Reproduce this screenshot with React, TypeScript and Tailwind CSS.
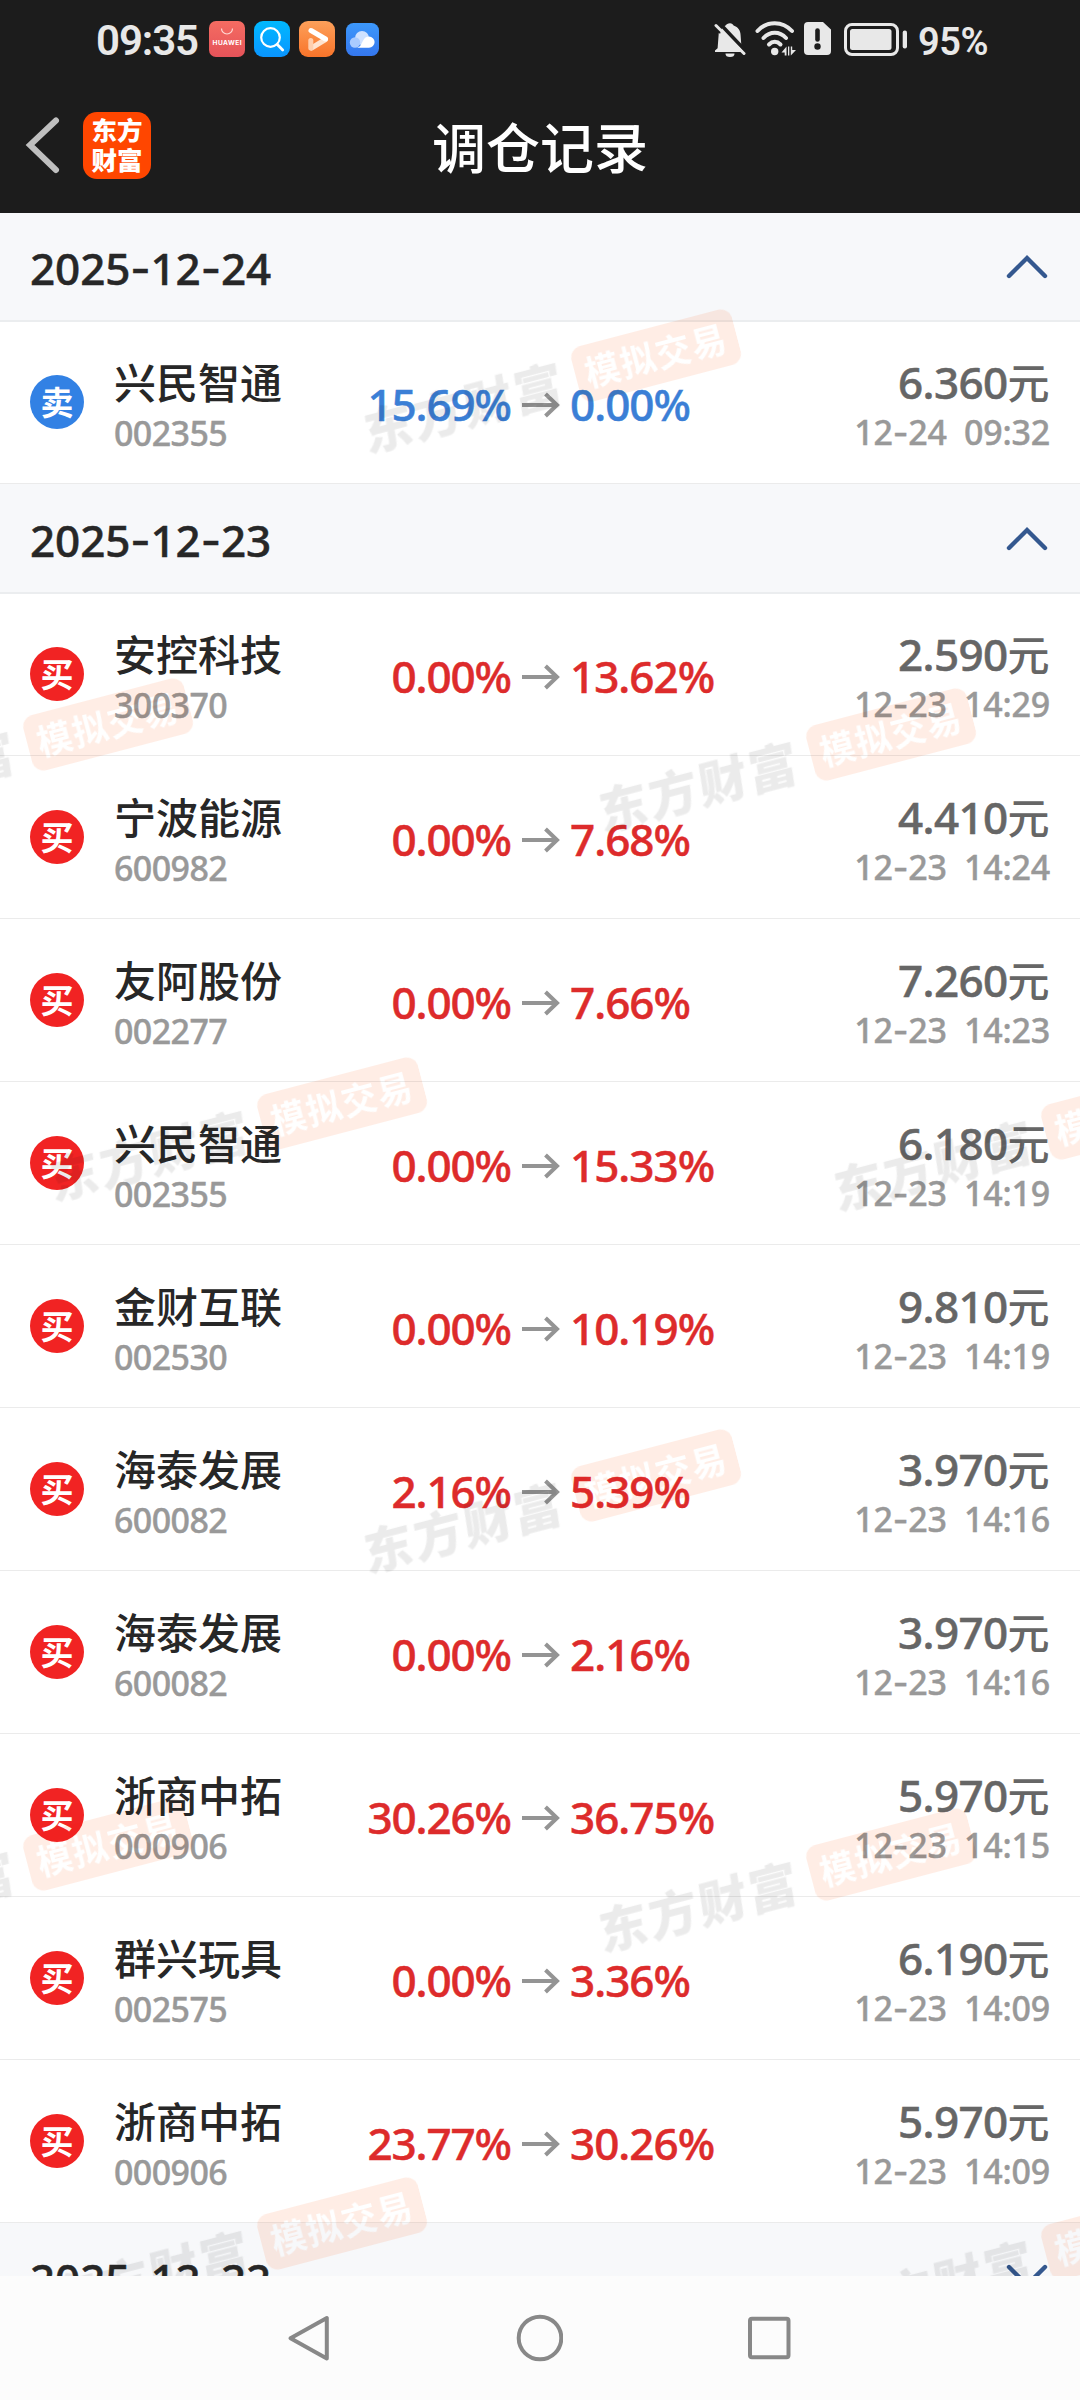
interface Trade {
  side: "buy" | "sell";
  name: string;
  code: string;
  from: string;
  to: string;
  price: string;
  time: string;
}

interface TradeDay {
  date: string;
  open: boolean;
  trades: Trade[];
}

const days: TradeDay[] = [
  {
    date: "2025-12-24",
    open: true,
    trades: [
      { side: "sell", name: "兴民智通", code: "002355", from: "15.69%", to: "0.00%", price: "6.360", time: "12-24  09:32" },
    ],
  },
  {
    date: "2025-12-23",
    open: true,
    trades: [
      { side: "buy", name: "安控科技", code: "300370", from: "0.00%", to: "13.62%", price: "2.590", time: "12-23  14:29" },
      { side: "buy", name: "宁波能源", code: "600982", from: "0.00%", to: "7.68%", price: "4.410", time: "12-23  14:24" },
      { side: "buy", name: "友阿股份", code: "002277", from: "0.00%", to: "7.66%", price: "7.260", time: "12-23  14:23" },
      { side: "buy", name: "兴民智通", code: "002355", from: "0.00%", to: "15.33%", price: "6.180", time: "12-23  14:19" },
      { side: "buy", name: "金财互联", code: "002530", from: "0.00%", to: "10.19%", price: "9.810", time: "12-23  14:19" },
      { side: "buy", name: "海泰发展", code: "600082", from: "2.16%", to: "5.39%", price: "3.970", time: "12-23  14:16" },
      { side: "buy", name: "海泰发展", code: "600082", from: "0.00%", to: "2.16%", price: "3.970", time: "12-23  14:16" },
      { side: "buy", name: "浙商中拓", code: "000906", from: "30.26%", to: "36.75%", price: "5.970", time: "12-23  14:15" },
      { side: "buy", name: "群兴玩具", code: "002575", from: "0.00%", to: "3.36%", price: "6.190", time: "12-23  14:09" },
      { side: "buy", name: "浙商中拓", code: "000906", from: "23.77%", to: "30.26%", price: "5.970", time: "12-23  14:09" },
    ],
  },
  { date: "2025-12-22", open: false, trades: [] },
];

// badge centres, relative to the top of the list
const watermarks = [
  { x: 656, y: 143 },
  { x: 108, y: 512 },
  { x: 891, y: 522 },
  { x: 342, y: 891 },
  { x: 1126, y: 901 },
  { x: 656, y: 1263 },
  { x: 108, y: 1632 },
  { x: 891, y: 1642 },
  { x: 342, y: 2011 },
  { x: 1126, y: 2021 },
];

// The hyphen of the text font is too short, Inter has the wide one
const DateText = ({ value }: { value: string }) => (
  <>
    {value.split("-").map((part, index) => (
      <span key={index}>
        {index > 0 && <span className="font-['Inter']">-</span>}
        {part}
      </span>
    ))}
  </>
);

const StatusBar = () => (
  <div className="flex h-20 items-start text-[#e8e8e8]">
    <div className="ml-[96px] mt-[14px] w-[113px] font-['Roboto'] text-[42px] leading-[54px] font-semibold tracking-[-1.1px]">
      09:35
    </div>
    <svg className="mt-[21px]" width="36" height="36" viewBox="0 0 36 36">
      <defs>
        <linearGradient id="mall" x1="0" y1="0" x2="0" y2="1">
          <stop offset="0" stopColor="#f56c62" />
          <stop offset="1" stopColor="#e55359" />
        </linearGradient>
      </defs>
      <rect width="36" height="36" rx="7" fill="url(#mall)" />
      <path d="M12.5 7.5a5.5 5.5 0 0 0 11 0" fill="none" stroke="#ffd9d4" strokeWidth="1.2" />
      <text x="18" y="24" textAnchor="middle" fontSize="6.6" fontWeight="700" fontFamily="Inter, sans-serif" fill="#fff" textLength="29">
        HUAWEI
      </text>
    </svg>
    <svg className="ml-[9px] mt-[21px]" width="36" height="36" viewBox="0 0 36 36">
      <defs>
        <linearGradient id="search" x1="0" y1="0" x2="0" y2="1">
          <stop offset="0" stopColor="#00b9ff" />
          <stop offset="1" stopColor="#0a95ff" />
        </linearGradient>
      </defs>
      <rect width="36" height="36" rx="9" fill="url(#search)" />
      <circle cx="16.5" cy="16.5" r="9.3" fill="none" stroke="#fff" strokeWidth="2.2" />
      <path d="M23.3 23.6l5.4 5.4" stroke="#fff" strokeWidth="2.8" strokeLinecap="round" />
    </svg>
    <svg className="ml-[9px] mt-[21px]" width="36" height="36" viewBox="0 0 36 36">
      <defs>
        <linearGradient id="video" x1="0" y1="0" x2="0" y2="1">
          <stop offset="0" stopColor="#fda05a" />
          <stop offset="1" stopColor="#f8742a" />
        </linearGradient>
      </defs>
      <rect width="36" height="36" rx="9" fill="url(#video)" />
      <path d="M26.500 18.500L12.500 27" stroke="#ffe3cf" strokeWidth="5" strokeLinecap="round" />
      <path d="M11.800 19.500v7.500" stroke="#ffcfae" strokeWidth="5" strokeLinecap="round" />
      <path d="M12 9.500l14.500 8.500" stroke="#fff" strokeWidth="5" strokeLinecap="round" />
    </svg>
    <svg className="ml-[11px] mt-[23px]" width="33" height="33" viewBox="0 0 33 33">
      <defs>
        <linearGradient id="cloud" x1="0" y1="0" x2="0" y2="1">
          <stop offset="0" stopColor="#3c98fb" />
          <stop offset="1" stopColor="#3577ee" />
        </linearGradient>
      </defs>
      <rect width="33" height="33" rx="7.5" fill="url(#cloud)" />
      <circle cx="16" cy="15" r="7" fill="#cfe2ff" />
      <circle cx="9" cy="19.5" r="5.2" fill="#a9cbff" />
      <path d="M11 24.700c3.500-1 4.500-4 6-7 1.200-2.700 3.400-4.200 6-4.200a5.600 5.600 0 0 1 0 11.200z" fill="#fff" />
    </svg>

    <svg className="ml-[335px] mt-[22px]" width="32" height="36" viewBox="0 0 32 36">
      <path
        d="M16 1.200c1.800 0 3.100.9 3.600 2.400 4.600 1.500 6.900 5.200 7 9.600l.9 12.500 1.500 3v1.300H1v-1.500l2.600-2.300 1-13c.2-4.300 2.400-8 7-9.600.6-1.500 2.300-2.400 4.400-2.400z"
        fill="currentColor"
      />
      <path d="M11.500 31.500h9a4.500 3.500 0 0 1-9 0z" fill="currentColor" />
      <path d="M4.500 0L33 30.500" stroke="#1c1c1c" strokeWidth="3.5" />
      <path d="M0 5L4 0l6 0-4 12z" fill="#1c1c1c" />
      <path d="M2 3.500l28 28" stroke="currentColor" strokeWidth="3" strokeLinecap="round" />
    </svg>
    <svg className="ml-[9px] mt-[21px]" width="42" height="36" viewBox="0 0 42 36">
      <g fill="none" stroke="currentColor" strokeWidth="4" strokeLinecap="round">
        <path d="M2.500 10C12-.5 27.500-.5 37 10" />
        <path d="M8.500 17C15 10 24.500 10 31 17" />
        <path d="M14 23.500c3.500-3.600 8-3.600 11.500 0" />
      </g>
      <circle cx="19.7" cy="30.5" r="3.7" fill="currentColor" />
      <path d="M31.500 25.500v9h-1.800v-3h-3.200zM33 25.500h1.300v9H33zM35.800 34.500v-9h1.400v3.500h3.800z" fill="currentColor" />
    </svg>
    <svg className="ml-[7px] mt-[22px]" width="27" height="33" viewBox="0 0 27 33">
      <path d="M4 0h15l8 7.500V29a4 4 0 0 1-4 4H4a4 4 0 0 1-4-4V4a4 4 0 0 1 4-4z" fill="currentColor" />
      <path d="M13.500 8.500v9" stroke="#1c1c1c" strokeWidth="4.6" strokeLinecap="round" />
      <circle cx="13.5" cy="24.5" r="3.2" fill="#1c1c1c" />
    </svg>
    <svg className="ml-[13px] mt-[23px]" width="64" height="33" viewBox="0 0 64 33">
      <rect x="1.5" y="1.5" width="52" height="30" rx="6.5" fill="none" stroke="currentColor" strokeWidth="3" />
      <rect x="6" y="6" width="41.5" height="21" rx="2.5" fill="currentColor" />
      <rect x="58.7" y="7.5" width="4.3" height="18" rx="2" fill="currentColor" />
    </svg>
    <div className="ml-[10px] mt-[15px] font-['Roboto'] text-[38px] leading-[54px] font-semibold tracking-[-0.5px]">
      95%
    </div>
  </div>
);

const TitleBar = () => (
  <div className="grid h-[133px] grid-cols-[1fr_auto_1fr] items-start">
    <div className="flex">
      <svg className="ml-6 mt-[35px]" width="40" height="60" viewBox="0 0 40 60">
        <path d="M32 5.500L6 30l26 25" fill="none" stroke="#bfbfbf" strokeWidth="6" strokeLinecap="round" />
      </svg>
      <div className="ml-[19px] mt-[32px] flex h-[67px] w-[68px] flex-col items-center rounded-[14px] bg-[#ff4600] pt-[3px] text-center text-[25.500px] leading-[30px] font-black text-white">
        <span>东方</span>
        <span>财富</span>
      </div>
    </div>
    <h1 className="mt-[33px] text-[54px] leading-[70px] font-medium text-white">
      调仓记录
    </h1>
  </div>
);

const DayHeader = ({ date, open }: { date: string; open: boolean }) => (
  <div className="flex h-[110px] items-center justify-between border-b-2 border-[#ebedef] bg-[#f7f8fa] px-[30px]">
    <div className="pt-[5px] text-[44px] leading-[60px] font-medium tracking-[-0.1px] text-[#272727] [-webkit-text-stroke:0.5px]">
      <DateText value={date} />
    </div>
    <svg width="46" height="30" viewBox="0 0 46 30">
      <path
        d={open ? "M5 25L23 7l18 18" : "M5 5l18 18L41 5"}
        fill="none"
        stroke="#34588f"
        strokeWidth="4.4"
        strokeLinecap="round"
      />
    </svg>
  </div>
);

const TradeRow = ({ trade }: { trade: Trade }) => {
  const buy = trade.side === "buy";
  const color = buy ? "text-[#dd2b2b]" : "text-[#3b7fd6]";
  return (
    <div className="flex h-[163px] items-end border-b border-[#ebebeb] bg-white px-[30px] font-medium first:h-[162px]">
      <div
        className={`mb-[54px] flex h-[54px] w-[54px] items-center justify-center rounded-full pt-px text-[33px] leading-[54px] font-semibold text-white ${
          buy ? "bg-[#f12323]" : "bg-[#3281e4]"
        }`}
      >
        {buy ? "买" : "卖"}
      </div>
      <div className="ml-[30px] w-[200px] pb-[27px]">
        <div className="text-[42px] leading-[54px] text-[#272727]">{trade.name}</div>
        <div className="text-[34px] leading-[46px] tracking-[-0.6px] text-[#999] [-webkit-text-stroke:0.4px]">
          {trade.code}
        </div>
      </div>
      <div
        className={`mb-[52px] w-[197px] text-right text-[44px] leading-[54px] tracking-[-1.1px] [-webkit-text-stroke:0.5px] ${color}`}
      >
        {trade.from}
      </div>
      <svg className="mb-[65px] ml-[11px]" width="38" height="26" viewBox="0 0 38 26">
        <path d="M0 13h35M23.500 2L35 13 23.500 24" fill="none" stroke="#949494" strokeWidth="4" />
      </svg>
      <div
        className={`mb-[52px] ml-[10px] w-[160px] text-[44px] leading-[54px] tracking-[-1px] [-webkit-text-stroke:0.5px] ${color}`}
      >
        {trade.to}
      </div>
      <div className="flex-1 pb-[27px] text-right">
        <div className="mr-px h-[54px] text-[44px] leading-[54px] tracking-[-0.6px] text-[#666]">
          <span className="[-webkit-text-stroke:0.5px]">{trade.price}</span>
          <span className="text-[42px]">元</span>
        </div>
        <div className="text-[34px] leading-[46px] tracking-[-0.2px] whitespace-pre text-[#999] [-webkit-text-stroke:0.4px]">
          <DateText value={trade.time} />
        </div>
      </div>
    </div>
  );
};

const Watermark = ({ x, y }: { x: number; y: number }) => (
  <div
    className="absolute flex h-[57px] w-[392px] origin-[309px_28px] -rotate-[14.700deg] items-center mix-blend-multiply"
    style={{ left: x - 309, top: y - 28 }}
  >
    <span className="ml-[7px] w-[219px] -skew-x-6 pt-[3px] text-[49px] leading-[57px] font-black tracking-[2.500px] whitespace-nowrap text-[#ebebeb]">
      东方财富
    </span>
    <span className="w-[166px] rounded-xl bg-[#ffede5] text-center text-[35px] leading-[57px] font-bold tracking-[1.500px] text-white">
      模拟交易
    </span>
  </div>
);

const NavBar = () => (
  <nav className="flex h-[124px] items-center justify-between bg-[#fcfcfc] pr-[287px] pl-[285px]">
    <svg width="48" height="48" viewBox="0 0 48 48" fill="none" stroke="#888" strokeWidth="4">
      <path d="M41.800 4v40.500L5.500 24.200z" strokeLinejoin="round" />
    </svg>
    <svg width="48" height="48" viewBox="0 0 48 48" fill="none" stroke="#888" strokeWidth="4">
      <circle cx="25" cy="24" r="21.3" />
    </svg>
    <svg width="48" height="48" viewBox="0 0 48 48" fill="none" stroke="#888" strokeWidth="4">
      <rect x="5" y="4.8" width="38.5" height="38.5" rx="2" />
    </svg>
  </nav>
);

export default function App() {
  return (
    <div className="flex h-[2400px] w-[1080px] flex-col overflow-hidden bg-white font-['Noto_Sans','Noto_Sans_CJK_SC',sans-serif]">
      <header className="relative z-10 -mb-px h-[213px] shrink-0 bg-[#1c1c1c]">
        <StatusBar />
        <TitleBar />
      </header>
      <main className="relative h-[2064px] shrink-0 overflow-hidden">
        {days.map((day) => (
          <section key={day.date}>
            <DayHeader date={day.date} open={day.open} />
            <div>
              {day.trades.map((trade, index) => (
                <TradeRow key={index} trade={trade} />
              ))}
            </div>
          </section>
        ))}
        {watermarks.map((mark, index) => (
          <Watermark key={index} x={mark.x} y={mark.y} />
        ))}
      </main>
      <NavBar />
    </div>
  );
}
